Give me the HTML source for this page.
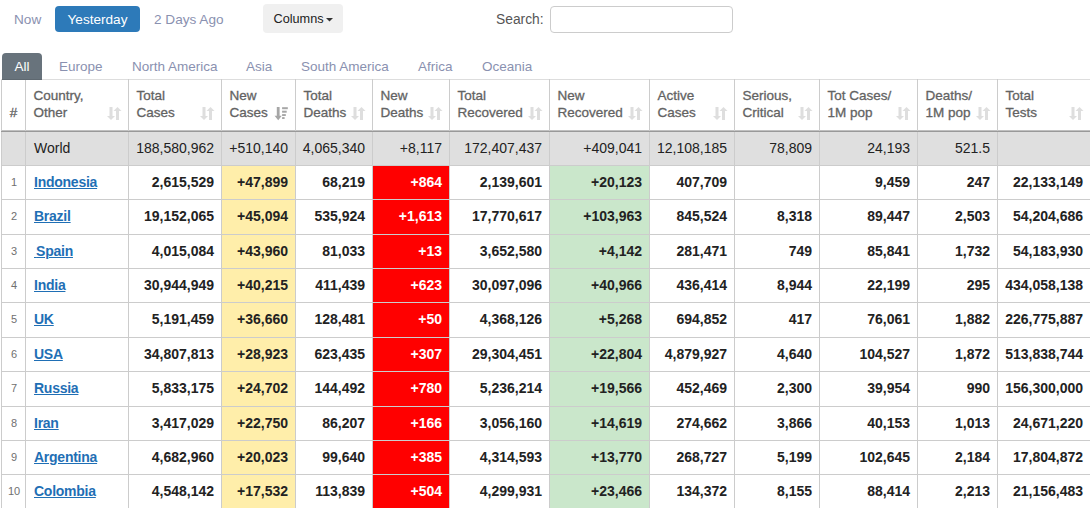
<!DOCTYPE html><html><head><meta charset="utf-8"><style>
*{box-sizing:border-box}
html,body{margin:0;padding:0;background:#fff;width:1090px;height:508px;overflow:hidden;font-family:"Liberation Sans",sans-serif;}
.abs{position:absolute;white-space:nowrap}
.btxt{font-size:13.6px;color:#8a91b0;}
.ybtn{left:55px;top:6px;width:85px;height:26px;background:#2d7ab9;border-radius:4px;color:#fff;font-size:13.6px;line-height:28px;text-align:center}
.cbtn{left:263px;top:4px;width:80px;height:29px;background:#f0f0f0;border-radius:4px;color:#222;font-size:12.7px;line-height:31px;padding-left:10.5px}
.caret{position:absolute;left:63px;top:13px;width:0;height:0;border-left:3.5px solid transparent;border-right:3.5px solid transparent;border-top:4px solid #333}
.search{left:496px;top:10px;font-size:13.8px;color:#555;line-height:20px}
.inp{left:550px;top:6px;width:183px;height:27px;border:1px solid #ccc;border-radius:4px}
.tab{font-size:13.5px;color:#8a91b0;top:58px;line-height:18px}
.alltab{z-index:2;left:2px;top:53px;width:40px;height:27px;background:#68737c;border-bottom:1px solid #5e6870;border-radius:4px 4px 0 0;color:#fff;font-size:13.5px;line-height:25px;padding-top:1px;text-align:center}
table{position:absolute;left:1px;top:79px;border-collapse:collapse;table-layout:fixed;width:1090px}
td,th{border:1px solid #ccc;overflow:hidden;white-space:nowrap}
th{font-size:13.5px;font-weight:normal;-webkit-text-stroke:0.3px #636363;color:#636363;text-align:left;vertical-align:bottom;line-height:17px;height:52px;padding:0 0 10px 7.5px;border-bottom:1px solid #999;box-shadow:inset 0 -1px 0 #c0c0c0;border-top-color:#ddd}
th.n{text-align:center;padding:0 0 10px 0}
td{font-size:14px;font-weight:bold;color:#222;text-align:right;padding:0 7px 2px 0}
td.c{text-align:left;padding-left:8px}
td.num{font-size:11px;font-weight:normal;color:#707070;text-align:center;padding:0 0 2px 1px}
tr.w td{background:#dfdfdf;font-weight:normal}
td.y{background:#ffeeaa}
td.r{background:#ff0000;color:#fff}
td.g{background:#cae7cb}
a{color:#1f6fb5;text-decoration:underline;letter-spacing:-0.25px}
</style></head><body>
<div class="abs btxt" style="left:14px;top:11px;line-height:18px">Now</div>
<div class="abs ybtn">Yesterday</div>
<div class="abs btxt" style="left:154px;top:11px;line-height:18px">2 Days Ago</div>
<div class="abs cbtn">Columns</div><svg class="abs" style="left:326px;top:17px" width="8" height="5" viewBox="0 0 8 5"><path fill="#333" d="M0 1h7l-3.5 3.6z"/></svg>
<div class="abs search">Search:</div>
<div class="abs inp"></div>
<div class="abs alltab">All</div>

<div class="abs tab" style="left:59px">Europe</div>
<div class="abs tab" style="left:132px">North America</div>
<div class="abs tab" style="left:246px">Asia</div>
<div class="abs tab" style="left:301px">South America</div>
<div class="abs tab" style="left:418px">Africa</div>
<div class="abs tab" style="left:482px">Oceania</div>
<table><colgroup>
<col style="width:24px">
<col style="width:103px">
<col style="width:93px">
<col style="width:74px">
<col style="width:77px">
<col style="width:77px">
<col style="width:100px">
<col style="width:100px">
<col style="width:85px">
<col style="width:85px">
<col style="width:98px">
<col style="width:80px">
<col style="width:93px">
</colgroup><thead><tr>
<th class="n">#</th>
<th>Country,<br>Other</th>
<th>Total<br>Cases</th>
<th>New<br>Cases</th>
<th>Total<br>Deaths</th>
<th>New<br>Deaths</th>
<th>Total<br>Recovered</th>
<th>New<br>Recovered</th>
<th>Active<br>Cases</th>
<th>Serious,<br>Critical</th>
<th>Tot&nbsp;Cases/<br>1M pop</th>
<th>Deaths/<br>1M pop</th>
<th>Total<br>Tests</th>
</tr></thead><tbody>
<tr class="w" style="height:34px">
<td class=""></td>
<td class="c">World</td>
<td class="">188,580,962</td>
<td class="">+510,140</td>
<td class="">4,065,340</td>
<td class="">+8,117</td>
<td class="">172,407,437</td>
<td class="">+409,041</td>
<td class="">12,108,185</td>
<td class="">78,809</td>
<td class="">24,193</td>
<td class="">521.5</td>
<td class=""></td>
</tr>
<tr style="height:34px">
<td class="num">1</td>
<td class="c"><a>Indonesia</a></td>
<td class="">2,615,529</td>
<td class="y">+47,899</td>
<td class="">68,219</td>
<td class="r">+864</td>
<td class="">2,139,601</td>
<td class="g">+20,123</td>
<td class="">407,709</td>
<td class=""></td>
<td class="">9,459</td>
<td class="">247</td>
<td class="">22,133,149</td>
</tr>
<tr style="height:35px">
<td class="num">2</td>
<td class="c"><a>Brazil</a></td>
<td class="">19,152,065</td>
<td class="y">+45,094</td>
<td class="">535,924</td>
<td class="r">+1,613</td>
<td class="">17,770,617</td>
<td class="g">+103,963</td>
<td class="">845,524</td>
<td class="">8,318</td>
<td class="">89,447</td>
<td class="">2,503</td>
<td class="">54,204,686</td>
</tr>
<tr style="height:34px">
<td class="num">3</td>
<td class="c"><a><span style="letter-spacing:-1.8px">&nbsp;</span>Spain</a></td>
<td class="">4,015,084</td>
<td class="y">+43,960</td>
<td class="">81,033</td>
<td class="r">+13</td>
<td class="">3,652,580</td>
<td class="g">+4,142</td>
<td class="">281,471</td>
<td class="">749</td>
<td class="">85,841</td>
<td class="">1,732</td>
<td class="">54,183,930</td>
</tr>
<tr style="height:34px">
<td class="num">4</td>
<td class="c"><a>India</a></td>
<td class="">30,944,949</td>
<td class="y">+40,215</td>
<td class="">411,439</td>
<td class="r">+623</td>
<td class="">30,097,096</td>
<td class="g">+40,966</td>
<td class="">436,414</td>
<td class="">8,944</td>
<td class="">22,199</td>
<td class="">295</td>
<td class="">434,058,138</td>
</tr>
<tr style="height:35px">
<td class="num">5</td>
<td class="c"><a>UK</a></td>
<td class="">5,191,459</td>
<td class="y">+36,660</td>
<td class="">128,481</td>
<td class="r">+50</td>
<td class="">4,368,126</td>
<td class="g">+5,268</td>
<td class="">694,852</td>
<td class="">417</td>
<td class="">76,061</td>
<td class="">1,882</td>
<td class="">226,775,887</td>
</tr>
<tr style="height:34px">
<td class="num">6</td>
<td class="c"><a>USA</a></td>
<td class="">34,807,813</td>
<td class="y">+28,923</td>
<td class="">623,435</td>
<td class="r">+307</td>
<td class="">29,304,451</td>
<td class="g">+22,804</td>
<td class="">4,879,927</td>
<td class="">4,640</td>
<td class="">104,527</td>
<td class="">1,872</td>
<td class="">513,838,744</td>
</tr>
<tr style="height:35px">
<td class="num">7</td>
<td class="c"><a>Russia</a></td>
<td class="">5,833,175</td>
<td class="y">+24,702</td>
<td class="">144,492</td>
<td class="r">+780</td>
<td class="">5,236,214</td>
<td class="g">+19,566</td>
<td class="">452,469</td>
<td class="">2,300</td>
<td class="">39,954</td>
<td class="">990</td>
<td class="">156,300,000</td>
</tr>
<tr style="height:34px">
<td class="num">8</td>
<td class="c"><a>Iran</a></td>
<td class="">3,417,029</td>
<td class="y">+22,750</td>
<td class="">86,207</td>
<td class="r">+166</td>
<td class="">3,056,160</td>
<td class="g">+14,619</td>
<td class="">274,662</td>
<td class="">3,866</td>
<td class="">40,153</td>
<td class="">1,013</td>
<td class="">24,671,220</td>
</tr>
<tr style="height:34px">
<td class="num">9</td>
<td class="c"><a>Argentina</a></td>
<td class="">4,682,960</td>
<td class="y">+20,023</td>
<td class="">99,640</td>
<td class="r">+385</td>
<td class="">4,314,593</td>
<td class="g">+13,770</td>
<td class="">268,727</td>
<td class="">5,199</td>
<td class="">102,645</td>
<td class="">2,184</td>
<td class="">17,804,872</td>
</tr>
<tr style="height:35px">
<td class="num">10</td>
<td class="c"><a>Colombia</a></td>
<td class="">4,548,142</td>
<td class="y">+17,532</td>
<td class="">113,839</td>
<td class="r">+504</td>
<td class="">4,299,931</td>
<td class="g">+23,466</td>
<td class="">134,372</td>
<td class="">8,155</td>
<td class="">88,414</td>
<td class="">2,213</td>
<td class="">21,156,483</td>
</tr>
</tbody></table>
<svg class="abs" style="left:107px;top:106px" width="15" height="15" viewBox="0 0 15 15"><path fill="#dedede" d="M2.5 1h3v9h2.5l-4 4l-4-4h2.5z"/><path fill="#dedede" d="M9 14h3v-9h2.5l-4-4l-4 4h2.5z"/></svg>
<svg class="abs" style="left:200px;top:106px" width="15" height="15" viewBox="0 0 15 15"><path fill="#dedede" d="M2.5 1h3v9h2.5l-4 4l-4-4h2.5z"/><path fill="#dedede" d="M9 14h3v-9h2.5l-4-4l-4 4h2.5z"/></svg>
<svg class="abs" style="left:274px;top:106px" width="14" height="15" viewBox="0 0 14 15"><path fill="#a6a6a6" d="M2.8 1h2.8v8.7h2.2l-3.6 4.6l-3.6-4.6h2.2z"/><rect fill="#a6a6a6" x="8.1" y="1.2" width="5.7" height="2"/><rect fill="#a6a6a6" x="8.1" y="4.7" width="4.6" height="2"/><rect fill="#a6a6a6" x="8.1" y="8.1" width="3.7" height="1.9"/><rect fill="#a6a6a6" x="8.1" y="11.1" width="2.5" height="1.9"/></svg>
<svg class="abs" style="left:351px;top:106px" width="15" height="15" viewBox="0 0 15 15"><path fill="#dedede" d="M2.5 1h3v9h2.5l-4 4l-4-4h2.5z"/><path fill="#dedede" d="M9 14h3v-9h2.5l-4-4l-4 4h2.5z"/></svg>
<svg class="abs" style="left:428px;top:106px" width="15" height="15" viewBox="0 0 15 15"><path fill="#dedede" d="M2.5 1h3v9h2.5l-4 4l-4-4h2.5z"/><path fill="#dedede" d="M9 14h3v-9h2.5l-4-4l-4 4h2.5z"/></svg>
<svg class="abs" style="left:528px;top:106px" width="15" height="15" viewBox="0 0 15 15"><path fill="#dedede" d="M2.5 1h3v9h2.5l-4 4l-4-4h2.5z"/><path fill="#dedede" d="M9 14h3v-9h2.5l-4-4l-4 4h2.5z"/></svg>
<svg class="abs" style="left:628px;top:106px" width="15" height="15" viewBox="0 0 15 15"><path fill="#dedede" d="M2.5 1h3v9h2.5l-4 4l-4-4h2.5z"/><path fill="#dedede" d="M9 14h3v-9h2.5l-4-4l-4 4h2.5z"/></svg>
<svg class="abs" style="left:713px;top:106px" width="15" height="15" viewBox="0 0 15 15"><path fill="#dedede" d="M2.5 1h3v9h2.5l-4 4l-4-4h2.5z"/><path fill="#dedede" d="M9 14h3v-9h2.5l-4-4l-4 4h2.5z"/></svg>
<svg class="abs" style="left:798px;top:106px" width="15" height="15" viewBox="0 0 15 15"><path fill="#dedede" d="M2.5 1h3v9h2.5l-4 4l-4-4h2.5z"/><path fill="#dedede" d="M9 14h3v-9h2.5l-4-4l-4 4h2.5z"/></svg>
<svg class="abs" style="left:896px;top:106px" width="15" height="15" viewBox="0 0 15 15"><path fill="#dedede" d="M2.5 1h3v9h2.5l-4 4l-4-4h2.5z"/><path fill="#dedede" d="M9 14h3v-9h2.5l-4-4l-4 4h2.5z"/></svg>
<svg class="abs" style="left:976px;top:106px" width="15" height="15" viewBox="0 0 15 15"><path fill="#dedede" d="M2.5 1h3v9h2.5l-4 4l-4-4h2.5z"/><path fill="#dedede" d="M9 14h3v-9h2.5l-4-4l-4 4h2.5z"/></svg>
<svg class="abs" style="left:1069px;top:106px" width="15" height="15" viewBox="0 0 15 15"><path fill="#dedede" d="M2.5 1h3v9h2.5l-4 4l-4-4h2.5z"/><path fill="#dedede" d="M9 14h3v-9h2.5l-4-4l-4 4h2.5z"/></svg>
</body></html>
